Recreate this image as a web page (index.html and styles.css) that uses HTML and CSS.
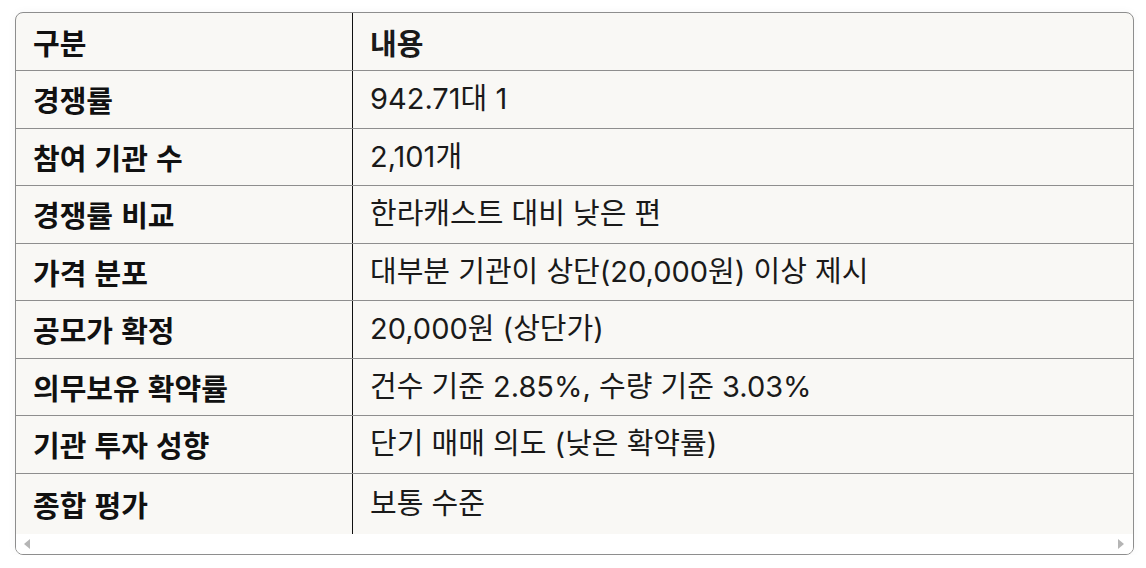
FILE: index.html
```html
<!DOCTYPE html>
<html lang="ko">
<head>
<meta charset="utf-8">
<link rel="stylesheet" href="styles.css">
</head>
<body>
<div class="frame">
  <table class="grid">
    <tbody>
      <tr class="head"><th>구분</th><td class="hcell">내용</td></tr>
      <tr><th>경쟁률</th><td>942.71대 1</td></tr>
      <tr><th>참여 기관 수</th><td>2,101개</td></tr>
      <tr><th>경쟁률 비교</th><td>한라캐스트 대비 낮은 편</td></tr>
      <tr><th>가격 분포</th><td>대부분 기관이 상단(20,000원) 이상 제시</td></tr>
      <tr><th>공모가 확정</th><td>20,000원 (상단가)</td></tr>
      <tr><th>의무보유 확약률</th><td>건수 기준 2.85%, 수량 기준 3.03%</td></tr>
      <tr><th>기관 투자 성향</th><td>단기 매매 의도 (낮은 확약률)</td></tr>
      <tr class="last"><th>종합 평가</th><td>보통 수준</td></tr>
    </tbody>
  </table>
  <div class="scrollbar">
    <span class="arrow left"></span>
    <span class="arrow right"></span>
  </div>
</div>
</body>
</html>
```

FILE: styles.css
```css
html, body {
  margin: 0;
  padding: 0;
  background: #ffffff;
}
body {
  padding: 12px 12px 0 15px;
  font-family: Inter, "Noto Sans CJK KR", sans-serif;
  color: #151515;
}
.frame {
  width: 1117px;
  border: 1px solid #8e8e8e;
  border-radius: 8px;
  overflow: hidden;
  background: #f9f8f5;
  box-shadow: 0 0 10px rgba(0,0,0,0.04);
}
.grid {
  width: 100%;
  border-collapse: collapse;
  font-size: 29px;
}
.grid th, .grid td {
  text-align: left;
  padding: 0 17px;
  height: 56.5px;
  line-height: 28px;
  border-bottom: 1px solid #8e8e8e;
  vertical-align: middle;
}
.grid th {
  width: 302px;
  font-weight: 700;
  color: #111;
  border-right: 1px solid #111;
  font-family: "Noto Sans CJK KR", sans-serif;
}
.grid td {
  font-weight: 400;
  color: #1a1a1a;
}
.grid .hcell {
  font-weight: 700;
  font-family: "Noto Sans CJK KR", sans-serif;
}
.grid tr.head th, .grid tr.head td { height: 57px; }
.grid tr.last th, .grid tr.last td {
  border-bottom: none;
  height: 60px;
}
.scrollbar {
  height: 20px;
  background: #ffffff;
  display: flex;
  align-items: center;
  justify-content: space-between;
  padding: 0 9px 0 8px;
}
.arrow {
  width: 0;
  height: 0;
  border-top: 5px solid transparent;
  border-bottom: 5px solid transparent;
}
.arrow.left { border-right: 6px solid #b5b5b5; }
.arrow.right { border-left: 6px solid #b5b5b5; }
```
